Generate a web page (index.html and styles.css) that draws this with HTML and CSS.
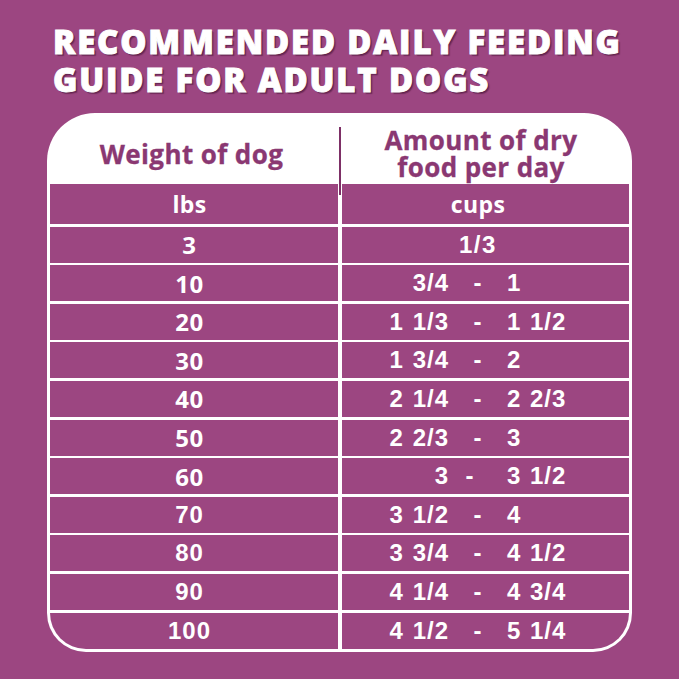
FILE: index.html
```html
<!DOCTYPE html>
<html>
<head>
<meta charset="utf-8">
<link rel="stylesheet" href="styles.css">
</head>
<body>
<div class="page">
  <h1 class="title"><span class="tline">RECOMMENDED DAILY FEEDING</span><span class="tline">GUIDE FOR ADULT DOGS</span></h1>
  <div class="table">
    <div class="head">
      <div class="head-left">Weight of dog</div>
      <div class="head-right"><span class="hline">Amount of dry</span><span class="hline">food per day</span></div>
    </div>
    <div class="grid">
      <div class="cell left unit">lbs</div>
      <div class="cell right"><span class="mid unit">cups</span></div>

      <div class="cell left">3</div>
      <div class="cell right"><span class="mid">1/3</span></div>

      <div class="cell left">10</div>
      <div class="cell right"><span class="a">3/4</span><span class="d">-</span><span class="b">1</span></div>

      <div class="cell left">20</div>
      <div class="cell right"><span class="a">1 1/3</span><span class="d">-</span><span class="b">1 1/2</span></div>

      <div class="cell left">30</div>
      <div class="cell right"><span class="a">1 3/4</span><span class="d">-</span><span class="b">2</span></div>

      <div class="cell left">40</div>
      <div class="cell right"><span class="a">2 1/4</span><span class="d">-</span><span class="b">2 2/3</span></div>

      <div class="cell left">50</div>
      <div class="cell right"><span class="a">2 2/3</span><span class="d">-</span><span class="b">3</span></div>

      <div class="cell left">60</div>
      <div class="cell right"><span class="a">3</span><span class="d shift">-</span><span class="b">3 1/2</span></div>

      <div class="cell left arial">70</div>
      <div class="cell right"><span class="a">3 1/2</span><span class="d">-</span><span class="b">4</span></div>

      <div class="cell left arial">80</div>
      <div class="cell right"><span class="a">3 3/4</span><span class="d">-</span><span class="b">4 1/2</span></div>

      <div class="cell left arial">90</div>
      <div class="cell right"><span class="a">4 1/4</span><span class="d">-</span><span class="b">4 3/4</span></div>

      <div class="cell left arial">100</div>
      <div class="cell right"><span class="a">4 1/2</span><span class="d">-</span><span class="b">5 1/4</span></div>
    </div>
  </div>
</div>
</body>
</html>
```

FILE: styles.css
```css
html, body {
  margin: 0;
  padding: 0;
  background: #9c4681;
}

.page {
  width: 679px;
  height: 679px;
  overflow: hidden;
  padding-top: 23px;
  box-sizing: border-box;
}

.title {
  margin: 0 0 14px 0;
  padding-left: 53px;
  font-family: "Open Sans", Lato, sans-serif;
  font-weight: 800;
  font-size: 33px;
  line-height: 38px;
  letter-spacing: 1.8px;
  color: #ffffff;
  -webkit-text-stroke: 0.9px #ffffff;
  text-shadow: 1px 1px 0 #5c1f4a, 2px 2px 1px rgba(60, 10, 40, 0.45);
}

.tline {
  display: block;
  height: 38px;
  white-space: nowrap;
}

.table {
  margin-left: 47px;
  width: 585px;
  background: #ffffff;
  border-radius: 48px 48px 39px 39px;
  padding: 0 3px 3px 3px;
  box-sizing: border-box;
}

.head {
  height: 71px;
  display: grid;
  grid-template-columns: 289px 1fr;
  color: #8a3872;
  font-family: "Open Sans", Lato, sans-serif;
  font-weight: 700;
  font-size: 26px;
  line-height: 27px;
  letter-spacing: 0.4px;
  -webkit-text-stroke: 0.3px #8a3872;
}

.head-left {
  display: flex;
  align-items: center;
  justify-content: center;
  padding-right: 6px;
  padding-top: 1px;
}

.head-right {
  display: flex;
  flex-direction: column;
  align-items: center;
  justify-content: center;
  text-align: center;
  padding-right: 8px;
  margin-top: 14px;
  padding-bottom: 14px;
  border-left: 2px solid #7d2f66;
}

.hline {
  display: block;
  height: 27px;
  overflow: visible;
  white-space: nowrap;
}

.grid {
  display: grid;
  grid-template-columns: 288px 1fr;
  grid-template-rows: 40px repeat(11, 36px);
  column-gap: 4px;
  row-gap: 2.6px;
  border-radius: 0 0 36px 36px;
  overflow: hidden;
}

.cell {
  background: #9c4681;
  color: #ffffff;
  display: flex;
  align-items: center;
}

.left {
  justify-content: center;
  padding-right: 9px;
  font-family: "Open Sans", Lato, sans-serif;
  font-weight: 700;
  font-size: 24px;
  letter-spacing: 0.6px;
}

.left.arial {
  font-family: "Liberation Sans", Arial, sans-serif;
  font-size: 24px;
  letter-spacing: 1px;
}

.unit {
  font-family: "Open Sans", Lato, sans-serif;
  font-weight: 700;
  font-size: 23px;
  letter-spacing: 0.4px;
}

.right {
  display: grid;
  grid-template-columns: 107px 58px 1fr;
  align-items: center;
  font-family: "Liberation Sans", Arial, sans-serif;
  font-weight: 700;
  font-size: 24px;
  letter-spacing: 1px;
  word-spacing: 1px;
}

.right .a {
  grid-column: 1;
  text-align: right;
  white-space: nowrap;
}

.right .d {
  grid-column: 2;
  text-align: center;
}

.right .d.shift {
  position: relative;
  left: -8px;
}

.right .b {
  grid-column: 3;
  text-align: left;
  white-space: nowrap;
}

.right .mid {
  grid-column: 2;
  justify-self: center;
  white-space: nowrap;
  letter-spacing: 1.6px;
}

.right .mid.unit {
  font-family: "Open Sans", Lato, sans-serif;
  font-size: 23px;
  letter-spacing: 0.4px;
}
```
